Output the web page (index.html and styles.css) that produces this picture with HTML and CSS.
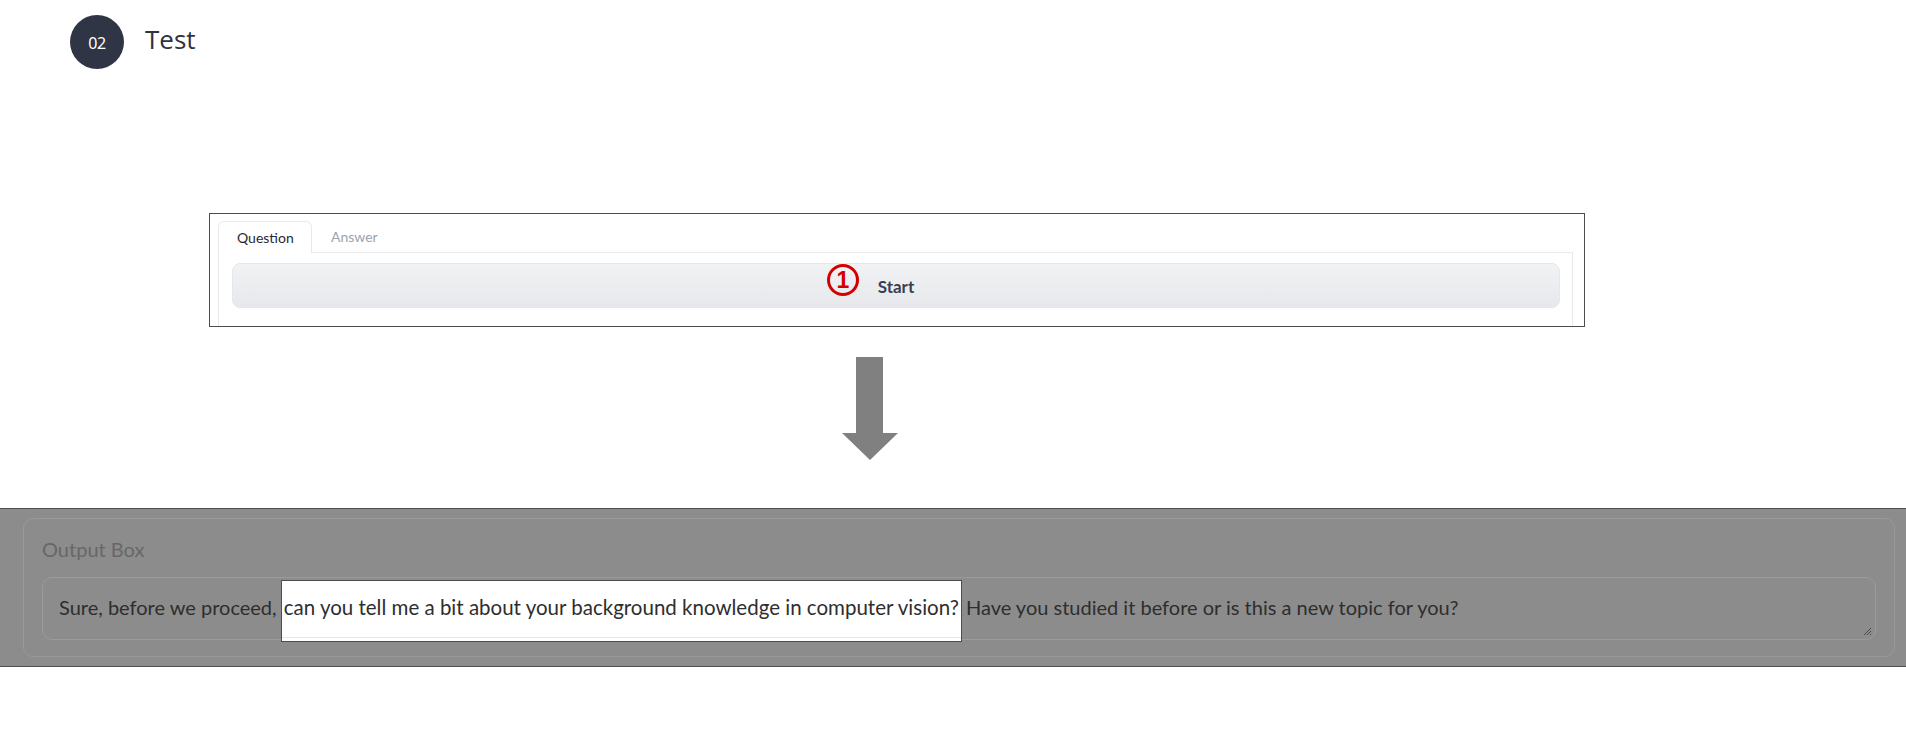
FILE: index.html
```html
<!DOCTYPE html>
<html lang="en">
<head>
<meta charset="utf-8">
<title>Test</title>
<link rel="stylesheet" href="styles.css">
</head>
<body>
  <header class="step">
    <div class="step-num">02</div>
    <h1 class="step-title">Test</h1>
  </header>

  <section class="shot">
    <div class="tabs">
      <div class="tab tab-active">Question</div>
      <div class="tab">Answer</div>
    </div>
    <div class="panel">
      <button class="start-btn">Start<span class="marker">1</span></button>
    </div>
  </section>

  <div class="arrow">
    <svg width="56" height="103" viewBox="0 0 56 103"><path d="M14 0 H41 V76 H56 L28 103 L0 76 H14 Z" fill="#808080"/></svg>
  </div>

  <section class="band">
    <div class="block">
      <div class="block-label">Output Box</div>
      <div class="textbox">Sure, before we proceed, <span class="highlight">can you tell me a bit about your background knowledge in computer vision?</span> Have you studied it before or is this a new topic for you?<svg class="resize" width="10" height="10" viewBox="0 0 10 10"><path d="M9 2 L2 9 M9 5 L5 9 M9 8 L8 9" stroke="#4a4a4a" stroke-width="1"/></svg></div>
    </div>
  </section>
</body>
</html>
```

FILE: styles.css
```css
* { box-sizing: border-box; }
html, body { margin: 0; padding: 0; background: #fff; }
body { font-family: Lato, "Open Sans", sans-serif; color: #333; }

.step {
  display: flex;
  align-items: center;
  gap: 21px;
  padding: 15px 0 0 70px;
  height: 69px;
}
.step-num {
  width: 54px;
  height: 54px;
  border-radius: 50%;
  background: #2f3544;
  color: #fff;
  display: flex;
  align-items: center;
  justify-content: center;
  font-family: "Noto Sans", sans-serif;
  font-size: 16px;
  letter-spacing: -0.5px;
  padding-top: 2px;
}
.step-title {
  margin: 0 0 6px 0;
  font-family: "Open Sans", sans-serif;
  font-weight: 400;
  font-size: 26px;
  color: #2d3340;
}

.shot {
  margin: 144px 0 0 209px;
  width: 1376px;
  height: 114px;
  border: 1px solid #4d4d4d;
  overflow: hidden;
  padding: 6px 11px 0 8px;
  background: #fff;
}
.tabs { display: flex; height: 32px; }
.tab {
  font-family: Lato, sans-serif;
  font-size: 14px;
  color: #9ca3af;
  padding: 8px 18px 0 19px;
}
.tab-active {
  width: 94px;
  color: #1f2937;
  border: 1px solid #e8e9ec;
  border-bottom: none;
  border-radius: 6px 6px 0 0;
  position: relative;
  top: 1px;
  background: #fff;
  padding-left: 18px;
  padding-top: 7px;
}
.panel {
  border: 1px solid #e8e9ec;
  padding: 10px 12px 20px 13px;
  height: 120px;
}
.start-btn {
  position: relative;
  width: 100%;
  height: 45px;
  border: 1px solid #e5e7eb;
  border-radius: 8px;
  background: linear-gradient(#f1f2f4, #e7e8eb);
  font-family: Lato, sans-serif;
  font-weight: 700;
  font-size: 17px;
  color: #374151;
  padding: 2px 0 0 0;
}
.marker {
  position: absolute;
  left: 594px;
  top: 0px;
  width: 32px;
  height: 32px;
  border: 3px solid #d40000;
  border-radius: 50%;
  color: #d40000;
  font-family: "Liberation Sans", sans-serif;
  font-size: 23px;
  font-weight: 700;
  line-height: 26px;
  text-align: center;
}

.arrow { margin: 30px 0 0 842px; height: 103px; }
.arrow svg { display: block; }

.band {
  margin-top: 48px;
  height: 159px;
  background: #8c8c8c;
  border-top: 1px solid #4d4d4d;
  border-bottom: 1px solid #4d4d4d;
  padding: 9px 11px 0 23px;
}
.block {
  height: 139px;
  border: 1px solid #999;
  border-radius: 10px;
  padding: 18px 18px 0 18px;
}
.block-label {
  font-family: Lato, sans-serif;
  font-size: 20px;
  line-height: 25px;
  color: #676767;
  height: 25px;
}
.textbox {
  position: relative;
  margin-top: 15px;
  height: 63px;
  border: 1px solid #9b9b9b;
  border-radius: 10px;
  padding: 2px 16px 0 16px;
  font-family: Lato, sans-serif;
  font-size: 20px;
  line-height: 24px;
  color: #2e2e2e;
  white-space: nowrap;
}
.highlight {
  display: inline-block;
  background: linear-gradient(to top, #fff 0 3px, #e6e6e6 3px 4px, #fff 4px);
  border: 1px solid #4d4d4d;
  padding: 14px 2px 22px 2px;
  font-size: 20.5px;
  color: #2e2e2e;
  margin: 0 -1px;
}
.resize {
  position: absolute;
  right: 3px;
  bottom: 3px;
}
```
